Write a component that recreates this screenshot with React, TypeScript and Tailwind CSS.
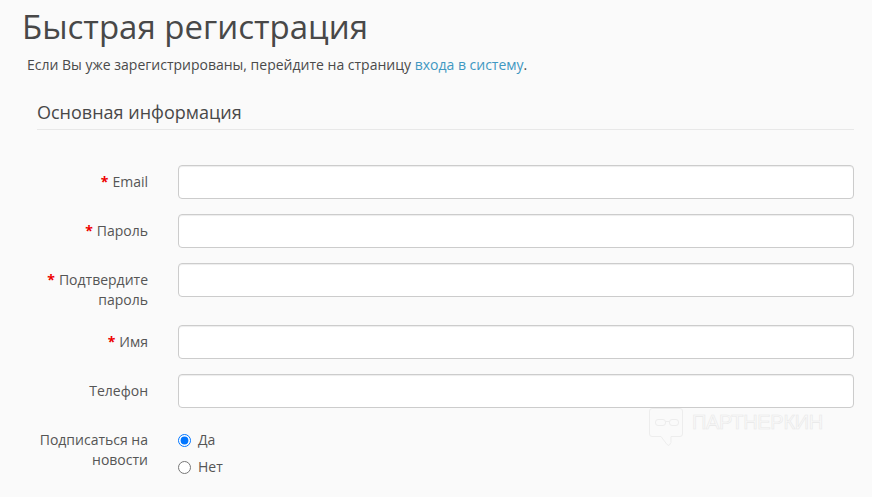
const fontStack = { fontFamily: '"Open Sans", sans-serif' };

function Required() {
  return <span className="mr-1 text-[14px] font-bold text-[#ee0000]">*</span>;
}

function Field({ label, required }: { label: React.ReactNode; required?: boolean }) {
  return (
    <div className="flex">
      <label className="w-[111px] pt-[7px] text-right text-[14px] leading-5 text-[#555]">
        {required && <Required />}
        {label}
      </label>
      <div className="ml-[30px] flex-1">
        <input
          type="text"
          className="block h-[34px] w-full rounded-[4px] border border-[#ccc] bg-white px-3 shadow-[inset_0_1px_1px_rgba(0,0,0,0.075)]"
        />
      </div>
    </div>
  );
}

function Watermark() {
  return (
    <div className="absolute left-[649px] top-[408px] flex items-start gap-[9px]">
      <svg width="34" height="38" viewBox="0 0 34 38" fill="none" stroke="#ededed" strokeWidth="1">
        <path d="M3 .5h28a2.500 2.500 0 0 1 2.500 2.500v23a2.500 2.500 0 0 1-2.500 2.500h-9v6l-2 3-2-1-6-8H3A2.500 2.500 0 0 1 .5 26V3A2.500 2.500 0 0 1 3 .5z" />
        <rect x="6.500" y="11.500" width="10" height="6" rx="2.500" />
        <rect x="20.500" y="11.500" width="9" height="6" rx="2.500" />
        <path d="M16.500 13.500h4" />
      </svg>
      <span className="mt-[2px] font-['Liberation_Sans',sans-serif] text-[20px] leading-6 tracking-[-0.3px] text-transparent [-webkit-text-stroke:0.6px_#e8e8e8]">
        ПАРТНЕРКИН
      </span>
    </div>
  );
}

export default function App() {
  return (
    <div className="relative h-[497px] w-[872px] overflow-hidden bg-[#fafafa]" style={fontStack}>
      <h1 className="pl-[22px] pt-[7px] text-[33px] font-normal leading-[40px] text-[#484848]">Быстрая регистрация</h1>
      <p className="mt-[8px] pl-[27px] text-[14px] leading-5 text-[#4a4a4a]">
        Если Вы уже зарегистрированы, перейдите на страницу{' '}
        <a className="text-[#3f98c2]">входа в систему</a>.
      </p>

      <div className="ml-[37px] mr-[18px] mt-[22px]">
        <h2 className="border-b border-[#e8e8e8] pb-[2px] text-[18px] font-normal leading-[30px] text-[#484848]">
          Основная информация
        </h2>

        <div className="mt-[35px] flex flex-col gap-[15px]">
          <Field required label="Email" />
          <Field required label="Пароль" />
          <Field required label={<>Подтвердите пароль</>} />
          <Field required label="Имя" />
          <Field label="Телефон" />
          <div className="flex">
            <div className="w-[111px] pt-[7px] text-right text-[14px] leading-5 text-[#555]">Подписаться на новости</div>
            <div className="ml-[30px] flex flex-col gap-[7px] pt-[7px] text-[14px] leading-5 text-[#555]">
              <label className="flex items-center gap-[7px]">
                <input type="radio" name="news" defaultChecked className="m-0 h-[13px] w-[13px] accent-[#0075ff]" />
                Да
              </label>
              <label className="flex items-center gap-[7px]">
                <input type="radio" name="news" className="m-0 h-[13px] w-[13px]" />
                Нет
              </label>
            </div>
          </div>
        </div>
      </div>
      <Watermark />
    </div>
  );
}
